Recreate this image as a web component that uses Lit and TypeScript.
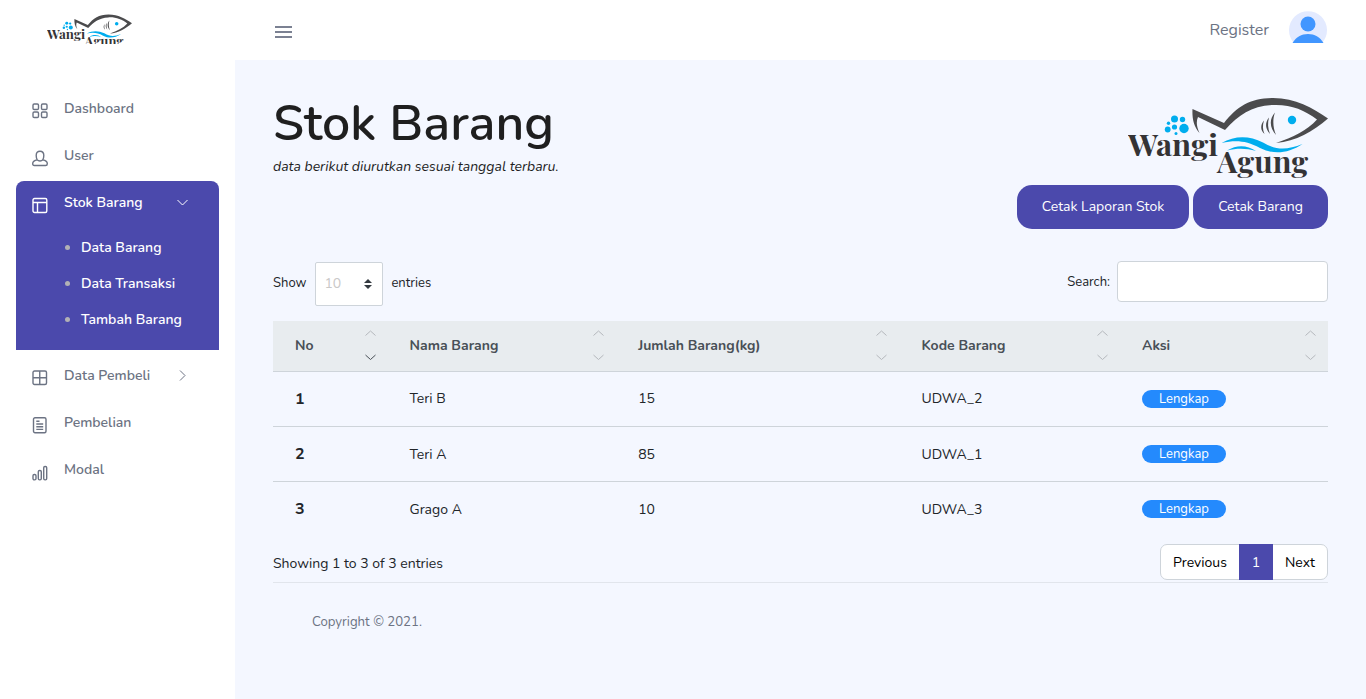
import { LitElement, html, svg, css } from "lit";
import { customElement, property } from "lit/decorators.js";

const FONT = css`Nunito, Lato, "Noto Sans", sans-serif`;

@customElement("brand-logo")
class BrandLogo extends LitElement {
  @property() box = "0 0 200 82";

  static styles = css`
    :host { display: block; }
    svg { display: block; width: 100%; height: 100%; }
    .fish { fill: #4b4b4d; }
    .sea { fill: #00adee; }
    .word { font-family: "Playfair Display", "Liberation Serif", serif; font-weight: 700; font-size: 30px; fill: #343335; }
  `;

  render() {
    return html`<svg viewBox=${this.box} preserveAspectRatio="xMinYMin meet">
      <path class="fish" d="M64.5 12 L96 26 C109 9.500 122 1 145 1 C168 1.500 184 10.500 200 21.500 C185 34.500 168 44.500 148 46 C165 40.500 179 33.500 189 22.500 C176 12.500 162 7 144 8 C123 9.500 111 17.500 97 33 L70 20 C68 24.500 68.500 29.500 71.500 36 C65.500 29.500 64 20.500 64.500 12 Z"/>
      <g class="fish">
        <path d="M136 23.500 C132 28 132.500 33.500 136.500 37 C134.500 32.500 134.500 28 136 23.500Z"/>
        <path d="M141 20.500 C136.500 26 137.500 32 142 37 C139.800 31 139.500 26 141 20.500Z"/>
        <path d="M147 15.500 C141 22 141.500 31 148 38 C144.800 30 144.500 22 147 15.500Z"/>
      </g>
      <g class="sea">
        <circle cx="164" cy="23" r="4.200"/>
        <circle cx="46.500" cy="22" r="3.500"/><circle cx="54.500" cy="22.500" r="2.700"/>
        <circle cx="40.500" cy="26.200" r="1.700"/><circle cx="46.500" cy="30" r="2.600"/>
        <circle cx="56" cy="31.500" r="4.700"/><circle cx="39.700" cy="32.500" r="2.900"/><circle cx="48" cy="36.500" r="1.500"/>
        <path d="M93.500 46 C107 38.500 121 38.500 135 45.500 C149 53.500 159 53 174.500 47 C160 56.500 146 58 132 51 C118 43.500 108 43 93.500 46Z"/>
        <path d="M99 53.500 C109 47.500 119 48 128 54 C118 51 109 51 99 53.500Z"/>
      </g>
      ${svg`<text class="word" x="0" y="58.500" textLength="90" lengthAdjust="spacingAndGlyphs">Wangi</text>
      <text class="word" x="89" y="75.500" textLength="91" lengthAdjust="spacingAndGlyphs">Agung</text>`}
    </svg>`;
  }
}

const icons: Record<string, unknown> = {
  grid: svg`<rect x="1" y="1" width="5.500" height="5.500" rx="1.200"/><rect x="9.500" y="1" width="5.500" height="5.500" rx="1.200"/><rect x="1" y="9" width="5.500" height="5.500" rx="1.200"/><rect x="9.500" y="9" width="5.500" height="5.500" rx="1.200"/>`,
  user: svg`<path d="M5.300 9.900C4.600 8.800 4.200 7.300 4.200 5.400C4.200 2.800 5.600 1.200 8 1.200C10.400 1.200 11.800 2.800 11.800 5.400C11.800 7.300 11.400 8.800 10.700 9.900C13.600 10.400 15.300 11.700 15.300 13.700C15.300 14.900 14.800 15.500 13.600 15.500H2.400C1.200 15.500.7 14.900.7 13.700C.7 11.700 2.400 10.400 5.300 9.900C6 10.800 7 11 8 11C9 11 10 10.800 10.700 9.900"/>`,
  layout: svg`<rect x="1" y="1.500" width="13.800" height="14" rx="1.500"/><path d="M1 5.500H15M5.500 5.500V15.500"/>`,
  table: svg`<rect x="1" y="1" width="13.500" height="13.500" rx="1.500"/><path d="M7.750 1V14.500M1 7.750H14.500"/>`,
  paper: svg`<rect x="1.500" y=".8" width="12.500" height="15" rx="1.500"/><path d="M4.300 4.300H7.500M4.300 7H11.200M4.300 9.700H11.200M4.300 12.400H11.200"/>`,
  bars: svg`<rect x="1" y="10.500" width="3" height="5.400" rx="1.300"/><rect x="6.300" y="6.500" width="3" height="9.400" rx="1.300"/><rect x="11.700" y="2.500" width="3" height="13.400" rx="1.300"/>`,
};

const rows = [
  ["1", "Teri B", "15", "UDWA_2"],
  ["2", "Teri A", "85", "UDWA_1"],
  ["3", "Grago A", "10", "UDWA_3"],
];

@customElement("app-root")
class AppRoot extends LitElement {
  static styles = css`
    :host { display: block; font-family: ${FONT}; font-size: 14px; color: #212529; }
    * { box-sizing: border-box; }
    .page { width: 100%; height: 699px; display: flex; background: #f4f7ff; overflow: hidden; }
    aside { width: 235px; background: #fff; flex: none; }
    .brand { height: 60px; padding: 14px 0 0 47px; }
    .brand brand-logo { width: 85px; height: 30px; overflow: hidden; }
    nav { padding: 25px 16px 0; }
    .item { height: 47px; display: flex; align-items: center; padding-left: 16px; color: #6c7383; font-weight: 600; line-height: 20px; }
    .item svg.icon { width: 16px; height: 17px; margin: 5px 16px 0 0; fill: none; stroke: currentColor; stroke-width: 1.4; }
    .item span { width: 113px; }
    .item .chev { width: 11px; height: 11px; fill: none; stroke: currentColor; }
    .group { background: #4b49ac; height: 169px; border-radius: 8px 8px 0 0; margin: 2px 0; }
    .group .item { color: #fff; height: 43px; }
    .sub { height: 36px; padding-left: 49px; display: flex; align-items: center; color: #fff; font-weight: 600; }
    .subs { padding-top: 5px; }
    .dot { width: 5px; height: 5px; border-radius: 50%; background: #b2b1b5; margin-right: 11px; }
    .main { flex: 1; display: flex; flex-direction: column; }
    header { height: 60px; background: #fff; display: flex; align-items: center; padding: 0 39px 0 40px; }
    .menu { width: 17px; height: 14px; margin-top: 4px; stroke: #7b8192; stroke-width: 2; }
    .register { margin-left: auto; margin-right: 20px; font-size: 16px; color: #6c7383; }
    .avatar { width: 38px; height: 38px; margin-top: -1px; }
    .content { padding: 37px 38px 0; }
    .top { display: flex; justify-content: space-between; height: 164px; }
    h1 { margin: 0; padding-top: 2px; font-size: 50px; line-height: 50px; font-weight: 600; color: #1f1f1f; }
    .note { font-style: italic; font-size: 14px; line-height: 20px; padding-top: 8px; color: #1f1f1f; }
    .right { display: flex; flex-direction: column; align-items: flex-end; }
    .big { width: 200px; height: 88px; }
    .btns { display: flex; gap: 4px; }
    .btn { height: 44px; padding-bottom: 2px; border-radius: 15px; background: #4b49ac; color: #fff; display: flex; align-items: center; justify-content: center; }
    .wide { width: 172px; } .narrow { width: 135px; }
    .controls { height: 60px; display: flex; justify-content: space-between; align-items: flex-start; font-size: 13px; }
    .len { display: flex; align-items: center; padding-top: 1px; }
    .len span { padding-bottom: 2px; }
    .select { width: 68px; height: 44px; margin: 0 8px 0 9px; background: #fff; border: 1px solid #ced4da; border-radius: 2px; display: flex; align-items: center; justify-content: space-between; padding: 0 10px 2px 8px; font-size: 14px; color: #c9c8c8; }
    .select svg { width: 8px; height: 10px; fill: #343a40; margin-top: 2px; }
    .search { display: flex; align-items: center; }
    .input { width: 211px; height: 41px; margin-left: 7px; background: #fff; border: 1px solid #ced4da; border-radius: 4px; }
    .row { display: grid; grid-template-columns: 114.500px 228.700px 283.300px 220.500px 208px; height: 55px; align-items: center; border-top: 1px solid #ced4da; }
    .row > * { padding-left: 22px; }
    .row b { font-size: 16px; font-weight: 700; }
    .row.first > .cell { padding-bottom: 2px; }
    .head { height: 50px; background: #e8ecef; border: 0; color: #495057; font-weight: 700; }
    .head > div { display: flex; justify-content: space-between; align-items: center; padding-right: 12px; }
    .head span { padding-bottom: 2px; }
    .sort { width: 11px; height: 30px; margin-bottom: 2px; fill: none; stroke: #b4b8bc; }
    .sort .on { stroke: #495057; }
    .badge { display: flex; align-items: center; justify-content: center; width: 84px; height: 18px; border-radius: 10px; background: #248afd; color: #fff; font-size: 13px; }
    .foot { display: flex; justify-content: space-between; align-items: center; height: 47px; border-bottom: 1px solid #e1e5ec; padding-top: 8px; }
    .pager { display: flex; height: 36px; margin-top: -3px; border: 1px solid #ced4da; border-radius: 7px; background: #fff; color: #000; line-height: 36px; text-align: center; }
    .prev { width: 78px; } .next { width: 54px; }
    .cur { width: 34px; height: 36px; margin: -1px 0; line-height: 38px; background: #4b49ac; color: #fff; }
    .copy { padding: 29px 0 0 39px; font-size: 13.200px; line-height: 20px; color: #6c7383; }
  `;

  item(icon: string, label: string, chev = "") {
    return html`<div class="item">
      <svg class="icon" viewBox="0 0 16 17">${icons[icon]}</svg><span>${label}</span>
      ${chev ? html`<svg class="chev" viewBox="0 0 11 11"><path d=${chev}/></svg>` : ""}
    </div>`;
  }

  head(label: string, active = false) {
    return html`<div><span>${label}</span><svg class="sort" viewBox="0 0 11 30"><path d="M.5 5.500 5.500 1 10.500 5.500"/><path class=${active ? "on" : ""} d="M.5 25 5.500 29.500 10.500 25"/></svg></div>`;
  }

  render() {
    return html`<div class="page">
      <aside>
        <div class="brand"><brand-logo box="0 0 200 70.6"></brand-logo></div>
        <nav>
          ${this.item("grid", "Dashboard")}
          ${this.item("user", "User")}
          <div class="group">
            ${this.item("layout", "Stok Barang", "M.5 3 5.500 8 10.500 3")}
            <div class="subs">${["Data Barang", "Data Transaksi", "Tambah Barang"].map((t) => html`<div class="sub"><i class="dot"></i>${t}</div>`)}</div>
          </div>
          ${this.item("table", "Data Pembeli", "M3 .5 8 5.500 3 10.500")}
          ${this.item("paper", "Pembelian")}
          ${this.item("bars", "Modal")}
        </nav>
      </aside>
      <div class="main">
        <header>
          <svg class="menu" viewBox="0 0 17 14"><path d="M0 2H17M0 7H17M0 12H17"/></svg>
          <span class="register">Register</span>
          <svg class="avatar" viewBox="0 0 38 38">
            <path fill="#e3eaff" d="M5 32A19 19 0 1 1 33 32Z"/>
            <circle cx="19" cy="13" r="7.500" fill="#4196ff"/>
            <path fill="#4196ff" d="M3.500 32C7 26 12.500 23 19 23S31 26 34.500 32Z"/>
          </svg>
        </header>
        <div class="content">
          <div class="top">
            <div><h1>Stok Barang</h1><div class="note">data berikut diurutkan sesuai tanggal terbaru.</div></div>
            <div class="right">
              <brand-logo class="big"></brand-logo>
              <div class="btns"><div class="btn wide">Cetak Laporan Stok</div><div class="btn narrow">Cetak Barang</div></div>
            </div>
          </div>
          <div class="controls">
            <div class="len"><span>Show</span><div class="select">10<svg viewBox="0 0 8 10"><path d="M4 0 8 4H0ZM0 6H8L4 10Z"/></svg></div><span>entries</span></div>
            <div class="search">Search:<div class="input"></div></div>
          </div>
          <div class="row head">${this.head("No", true)}${this.head("Nama Barang")}${this.head("Jumlah Barang(kg)")}${this.head("Kode Barang")}${this.head("Aksi")}</div>
          ${rows.map((r, i) => html`<div class="row ${i === 0 ? "first" : ""}"><b>${r[0]}</b><div class="cell">${r[1]}</div><div class="cell">${r[2]}</div><div class="cell">${r[3]}</div><div><span class="badge">Lengkap</span></div></div>`)}
          <div class="foot"><span>Showing 1 to 3 of 3 entries</span>
            <div class="pager"><div class="prev">Previous</div><div class="cur">1</div><div class="next">Next</div></div>
          </div>
          <div class="copy">Copyright © 2021.</div>
        </div>
      </div>
    </div>`;
  }
}
